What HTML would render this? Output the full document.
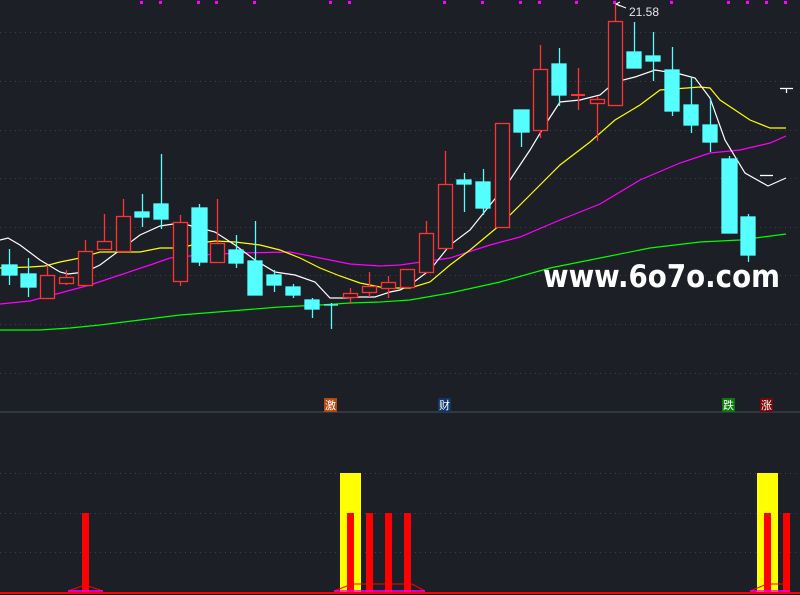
<!DOCTYPE html>
<html><head><meta charset="utf-8"><style>
html,body{margin:0;padding:0;background:#1c1f26;}
svg{display:block}
</style></head><body>
<svg width="800" height="595" viewBox="0 0 800 595" xmlns="http://www.w3.org/2000/svg">
<rect width="800" height="595" fill="#1c1f26"/>
<g stroke="#3c424c" stroke-width="1" stroke-dasharray="1,4">
<line x1="0" y1="32.5" x2="800" y2="32.5"/><line x1="0" y1="81.5" x2="800" y2="81.5"/>
<line x1="0" y1="130.5" x2="800" y2="130.5"/><line x1="0" y1="178.5" x2="800" y2="178.5"/>
<line x1="0" y1="227.5" x2="800" y2="227.5"/><line x1="0" y1="275.5" x2="800" y2="275.5"/>
<line x1="0" y1="324.5" x2="800" y2="324.5"/><line x1="0" y1="373.5" x2="800" y2="373.5"/>
<line x1="0" y1="473.5" x2="800" y2="473.5"/><line x1="0" y1="513.5" x2="800" y2="513.5"/>
<line x1="0" y1="552.5" x2="800" y2="552.5"/>
</g>
<line x1="0" y1="412" x2="800" y2="412" stroke="#3a414c" stroke-width="1.5"/>
<g fill="#ff00ff">
<rect x="140" y="1" width="3" height="3"/><rect x="159" y="1" width="3" height="3"/><rect x="197" y="1" width="3" height="3"/><rect x="215" y="1" width="3" height="3"/><rect x="253" y="1" width="3" height="3"/><rect x="329" y="1" width="3" height="3"/><rect x="348" y="1" width="3" height="3"/><rect x="443" y="1" width="3" height="3"/><rect x="481" y="1" width="3" height="3"/><rect x="519" y="1" width="3" height="3"/><rect x="538" y="1" width="3" height="3"/><rect x="575" y="1" width="3" height="3"/><rect x="613" y="1" width="3" height="3"/><rect x="670" y="1" width="3" height="3"/><rect x="727" y="1" width="3" height="3"/><rect x="746" y="1" width="3" height="3"/><rect x="765" y="1" width="3" height="3"/><rect x="784" y="1" width="3" height="3"/>
</g>
<!-- MA lines -->
<g fill="none" stroke-width="1.2">
<polyline stroke="#00ff00" points="0,330 40,330 70,328 100,325 140,320 180,315 230,311 280,307 320,305 350,303 380,302 410,300 450,293 500,282 550,268 600,258 650,248 700,242 740,240 786,234"/>
<polyline stroke="#ff00ff" points="0,304 30,301 60,293 90,285 120,275 150,265 170,258 200,255 240,253 290,252 320,258 350,264 380,266 400,265 450,258 490,245 520,237 560,220 600,204 640,180 680,163 710,153 740,150 770,143 786,136"/>
<polyline stroke="#ffff00" points="0,268 30,267 45,266 60,262 80,258 100,252 115,252 140,252 160,248 180,248 200,243 215,241 235,242 260,245 280,250 300,258 320,268 340,276 360,283 380,287 395,288 410,288 430,282 450,265 470,250 500,225 530,195 560,165 590,142 615,120 640,105 660,90 700,87 710,88 720,100 750,120 770,128 786,128"/>
<polyline stroke="#ffffff" points="0,240 8,238 20,245 40,260 60,272 68,274 85,272 100,265 120,250 140,235 160,226 180,223 200,228 215,232 235,245 255,260 275,272 295,275 315,282 330,298 345,298 360,297 375,297 390,292 400,290 410,285 430,270 450,245 470,230 490,205 510,180 530,150 545,125 560,102 580,100 600,95 615,82 635,77 655,70 680,74 695,78 710,98 725,140 745,173 768,186 786,178"/>
</g>
<!-- candles -->
<g stroke-width="1.3">
<g stroke="#55ffff" fill="#55ffff">
<line x1="9.5" y1="249" x2="9.5" y2="285"/><rect x="2" y="265" width="15" height="10"/>
<line x1="28.5" y1="258" x2="28.5" y2="297"/><rect x="21" y="274" width="15" height="13"/>
<line x1="142.5" y1="194" x2="142.5" y2="227"/><rect x="135" y="212" width="14" height="5"/>
<line x1="161.5" y1="154" x2="161.5" y2="229"/><rect x="154" y="204" width="14" height="15"/>
<line x1="199.5" y1="204" x2="199.5" y2="266"/><rect x="192" y="208" width="15" height="54"/>
<line x1="236.5" y1="235" x2="236.5" y2="268"/><rect x="229" y="250" width="14" height="13"/>
<line x1="255.5" y1="221" x2="255.5" y2="295"/><rect x="248" y="261" width="14" height="34"/>
<line x1="274.5" y1="270" x2="274.5" y2="292"/><rect x="267" y="275" width="14" height="10"/>
<line x1="293.5" y1="284" x2="293.5" y2="298"/><rect x="286" y="287" width="14" height="8"/>
<line x1="312.5" y1="298" x2="312.5" y2="318"/><rect x="305" y="300" width="14" height="9"/>
<line x1="331.5" y1="303" x2="331.5" y2="329"/><line x1="324" y1="305" x2="338" y2="305"/>
<line x1="464.5" y1="173" x2="464.5" y2="212"/><rect x="457" y="180" width="14" height="4"/>
<line x1="483.5" y1="169" x2="483.5" y2="215"/><rect x="476" y="182" width="14" height="26"/>
<line x1="521.5" y1="110" x2="521.5" y2="147"/><rect x="514" y="110" width="15" height="22"/>
<line x1="559.5" y1="48" x2="559.5" y2="106"/><rect x="552" y="64" width="14" height="31"/>
<line x1="634.5" y1="22" x2="634.5" y2="68"/><rect x="627" y="52" width="14" height="16"/>
<line x1="653.5" y1="32" x2="653.5" y2="81"/><rect x="646" y="56" width="14" height="5"/>
<line x1="672.5" y1="47" x2="672.5" y2="116"/><rect x="665" y="70" width="14" height="41"/>
<line x1="691.5" y1="77" x2="691.5" y2="133"/><rect x="684" y="105" width="14" height="20"/>
<line x1="710.5" y1="98" x2="710.5" y2="152"/><rect x="703" y="125" width="14" height="17"/>
<line x1="729.5" y1="156" x2="729.5" y2="233"/><rect x="722" y="159" width="15" height="74"/>
<line x1="748.5" y1="214" x2="748.5" y2="262"/><rect x="741" y="217" width="14" height="38"/>
</g>
<g stroke="#ff3333" fill="#1c1f26">
<line x1="47.5" y1="265" x2="47.5" y2="275"/><rect x="40.5" y="275.5" width="14" height="23"/>
<line x1="66.5" y1="270" x2="66.5" y2="285"/><rect x="59.5" y="277.5" width="14" height="6"/>
<line x1="85.5" y1="240" x2="85.5" y2="251"/><rect x="78.5" y="251.5" width="14" height="34"/>
<line x1="104.5" y1="214" x2="104.5" y2="241"/><rect x="97.5" y="241.5" width="14" height="8"/>
<line x1="123.5" y1="199" x2="123.5" y2="216"/><rect x="116.5" y="216.5" width="14" height="35"/>
<line x1="180.5" y1="215" x2="180.5" y2="286"/><rect x="173.5" y="222.5" width="14" height="59"/>
<line x1="217.5" y1="199" x2="217.5" y2="243"/><rect x="210.5" y="243.5" width="14" height="19"/>
<line x1="350.5" y1="288" x2="350.5" y2="304"/><rect x="343.5" y="293.5" width="14" height="4"/>
<line x1="369.5" y1="272" x2="369.5" y2="297"/><rect x="362.5" y="286.5" width="14" height="6"/>
<line x1="388.5" y1="276" x2="388.5" y2="298"/><rect x="381.5" y="282.5" width="14" height="6"/>
<rect x="400.5" y="269.5" width="14" height="18"/>
<line x1="426.5" y1="221" x2="426.5" y2="233"/><rect x="419.5" y="233.5" width="14" height="39"/>
<line x1="445.5" y1="151" x2="445.5" y2="184"/><rect x="438.5" y="184.5" width="14" height="64"/>
<rect x="495.5" y="123.5" width="14" height="104"/>
<line x1="540.5" y1="45" x2="540.5" y2="69"/><line x1="540.5" y1="130" x2="540.5" y2="138"/><rect x="533.5" y="69.5" width="14" height="61"/>
<line x1="578.5" y1="68" x2="578.5" y2="110"/><line x1="571" y1="95" x2="585" y2="95" stroke-width="2"/>
<line x1="597.5" y1="96" x2="597.5" y2="141"/><rect x="590.5" y="99.5" width="14" height="4"/>
<line x1="615.5" y1="5" x2="615.5" y2="21"/><rect x="608.5" y="21.5" width="14" height="84"/>
</g>
<g stroke="#ffffff">
<line x1="780" y1="88.5" x2="793" y2="88.5"/><line x1="786.5" y1="88" x2="786.5" y2="93"/>
<line x1="760" y1="175.5" x2="773" y2="175.5"/>
<polyline fill="none" points="620,6 616,4 620,2" stroke-width="1"/>
<line x1="616" y1="4" x2="626" y2="8" stroke-width="1"/>
</g>
</g>
<text x="629" y="16" fill="#e8e8e8" font-family="Liberation Sans, sans-serif" font-size="12">21.58</text>
<text x="543" y="287" fill="#ffffff" font-family="DejaVu Sans, sans-serif" font-weight="bold" font-size="31" textLength="237" lengthAdjust="spacingAndGlyphs">www.6o7o.com</text>
<!-- labels -->
<g font-family="Liberation Sans, Noto Sans CJK SC, sans-serif" font-size="11" fill="#ffffff" text-anchor="middle">
<rect x="324" y="398" width="13" height="14" fill="#b4480e"/><text x="330.5" y="409">激</text>
<rect x="438" y="398" width="13" height="14" fill="#0e3766"/><text x="444.5" y="409">财</text>
<rect x="722" y="398" width="13" height="14" fill="#0a7a0a"/><text x="728.5" y="409">跌</text>
<rect x="760" y="398" width="13" height="14" fill="#780808"/><text x="766.5" y="409">涨</text>
</g>
<!-- lower bars -->
<g fill="#ffff00">
<rect x="340" y="473" width="21" height="119"/><rect x="757" y="473" width="21" height="119"/>
</g>
<g fill="#ff0000">
<rect x="82" y="513" width="7" height="79"/>
<rect x="347" y="513" width="7" height="79"/><rect x="366" y="513" width="7" height="79"/>
<rect x="385" y="513" width="7" height="79"/><rect x="404" y="513" width="7" height="79"/>
<rect x="764" y="513" width="7" height="79"/><rect x="783" y="513" width="7" height="79"/>
</g>
<g fill="none" stroke="#ff0000" stroke-width="1">
<polyline points="68,591 85,585 103,591"/>
<polyline points="334,591 352,584 412,584 425,591"/>
<polyline points="750,591 767,584 783,584"/>
</g>
<g stroke="#ff00ff" stroke-width="1.5">
<line x1="68" y1="591" x2="103" y2="591"/><line x1="334" y1="591" x2="425" y2="591"/><line x1="750" y1="591" x2="790" y2="591"/>
</g>
<line x1="0" y1="593" x2="800" y2="593" stroke="#ff0000" stroke-width="2"/>
</svg>
</body></html>
